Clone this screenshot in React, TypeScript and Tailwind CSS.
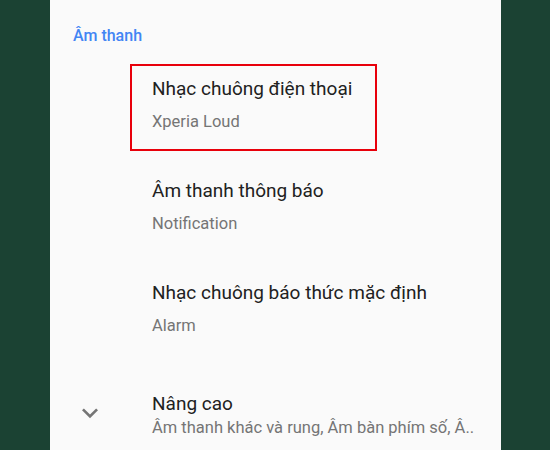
const rows = [
  { title: "Nhạc chuông điện thoại", summary: "Xperia Loud", marked: true },
  { title: "Âm thanh thông báo", summary: "Notification" },
  { title: "Nhạc chuông báo thức mặc định", summary: "Alarm" },
];

function ExpandMore() {
  return (
    <svg viewBox="0 0 24 24" className="h-8 w-8" fill="#757575">
      <path d="M16.59 8.59L12 13.17 7.41 8.59 6 10l6 6 6-6z" />
    </svg>
  );
}

export default function App() {
  return (
    <div
      className="flex h-[450px] w-[550px] overflow-hidden bg-[#1b4233]"
      style={{ fontFamily: "Roboto, 'Noto Sans', sans-serif" }}
    >
      <div className="ml-[50px] h-full w-[451px] bg-[#fafafa]">
        <div className="pl-[23px] pt-[26px] text-[16px] font-medium leading-[20px] text-[#4285f4]">
          Âm thanh
        </div>

        {rows.map((row) => (
          <div key={row.title} className="relative pb-[16px] pl-[102px] pt-[31px]">
            {row.marked && (
              <div className="absolute left-[80px] top-[18px] h-[87px] w-[247px] border-2 border-[#e8000b]" />
            )}
            <div className="text-[19px] leading-[24px] text-[#212121]">{row.title}</div>
            <div className="mt-[11px] text-[16.5px] leading-[20px] text-[#757575]">{row.summary}</div>
          </div>
        ))}

        <div className="flex items-center pt-[40px]">
          <div className="w-[102px] pl-[24px]">
            <div className="-mt-[4px]">
              <ExpandMore />
            </div>
          </div>
          <div className="min-w-0 flex-1 pr-[20px]">
            <div className="text-[19px] leading-[24px] text-[#212121]">Nâng cao</div>
            <div className="mt-[2px] whitespace-nowrap text-[16.5px] leading-[20px] text-[#757575]">
              Âm thanh khác và rung, Âm bàn phím số, Â..
            </div>
          </div>
        </div>
      </div>
    </div>
  );
}
